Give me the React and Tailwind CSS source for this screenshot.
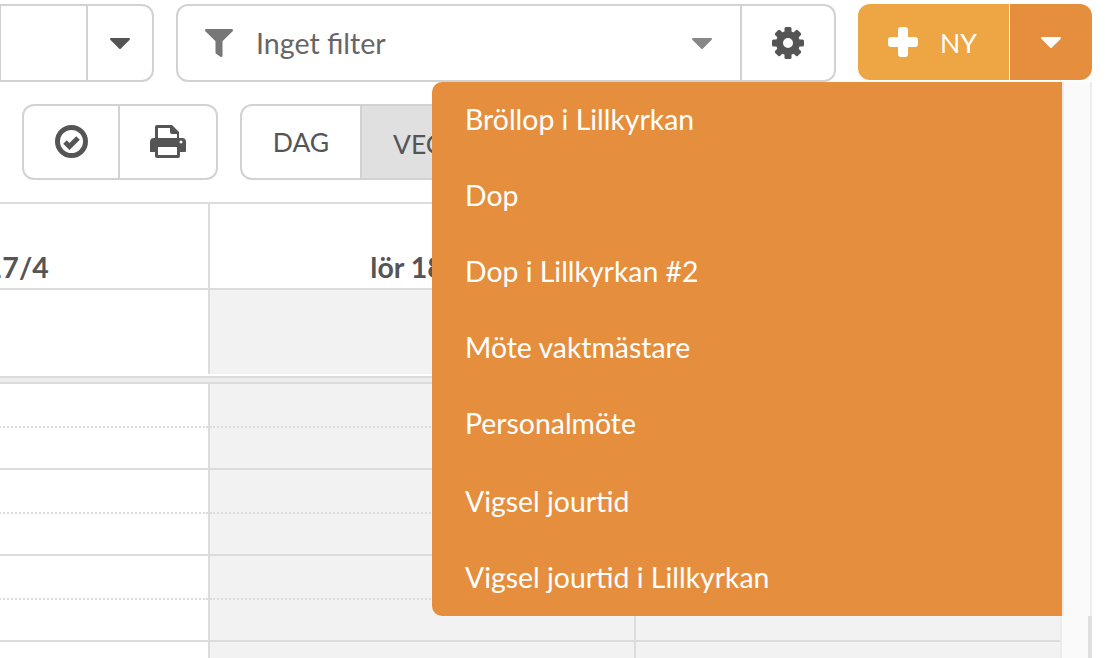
import { FaFilter } from "react-icons/fa";

function Caret({ className }) {
    return (
        <svg width="20" height="11" viewBox="0 0 20 11" className={className}>
            <path d="M1 0h18a1 1 0 0 1 .7 1.7l-9 9a1 1 0 0 1-1.4 0l-9-9A1 1 0 0 1 1 0z" fill="currentColor" />
        </svg>
    );
}

function PrintIcon() {
    return (
        <svg width="36" height="33" viewBox="0 0 36 33" className="text-[#555]">
            <path
                fill="currentColor"
                fillRule="evenodd"
                d="M5 2a2 2 0 0 1 2-2h15l7 7v6h3a4 4 0 0 1 4 4v9a1 1 0 0 1-1 1h-5v4a2 2 0 0 1-2 2H7a2 2 0 0 1-2-2v-4H0.500a.5.5 0 0 1-.5-.5V17a4 4 0 0 1 4-4h1zM8 3v10h19V9h-5a2 2 0 0 1-2-2V3zM8 22v8h19v-8zM31 15.500a1.500 1.500 0 1 0 .01 0z"
            />
        </svg>
    );
}

function CheckIcon() {
    return (
        <svg width="33" height="33" viewBox="0 0 33 33" fill="none" stroke="#555" className="shrink-0">
            <circle cx="16.500" cy="16.500" r="14" strokeWidth="5" />
            <path d="M10 17l4.500 4.500 8.500-8.500" strokeWidth="5" />
        </svg>
    );
}

function GearIcon() {
    return (
        <svg width="32" height="32" viewBox="0 0 32 32" className="text-[#555]">
            <circle cx="16" cy="16" r="8.500" fill="none" stroke="currentColor" strokeWidth="7" />
            {[0, 45, 90, 135, 180, 225, 270, 315].map((deg) => (
                <rect key={deg} x="12.500" y="0" width="7" height="7" rx="1.500" fill="currentColor" transform={`rotate(${deg} 16 16)`} />
            ))}
        </svg>
    );
}

function PlusIcon() {
    return (
        <svg width="30" height="30" viewBox="0 0 30 30" className="shrink-0" fill="#fff">
            <rect x="10" y="0" width="10" height="30" rx="3" />
            <rect x="0" y="10" width="30" height="10" rx="3" />
        </svg>
    );
}

function Row({ dotted = true }) {
    return (
        <div className="grid grid-cols-[426px_426px_426px] h-[86px] border-b-2 border-[#dcdcdc]">
            {[0, 1, 2].map((i) => (
                <div key={i} className={`h-full border-r-2 border-[#dcdcdc] pt-[42px] ${i === 0 ? "bg-white" : "bg-[#f2f2f2]"}`}>
                    {dotted && <div className="border-t-2 border-dotted border-[#dcdcdc]" />}
                </div>
            ))}
        </div>
    );
}

const items = [
    "Bröllop i Lillkyrkan",
    "Dop",
    "Dop i Lillkyrkan #2",
    "Möte vaktmästare",
    "Personalmöte",
    "Vigsel jourtid",
    "Vigsel jourtid i Lillkyrkan",
];

export default function App() {
    return (
        <div className="relative w-[1110px] h-[658px] overflow-hidden bg-white font-['Lato',sans-serif] text-[#555]">
            <div className="flex h-[104px] pt-1">
                <div className="flex w-[155px] h-[78px] justify-end -ml-px rounded-r-xl border-2 border-[#d2d2d2]">
                    <div className="flex w-[66px] items-center justify-center border-l-2 border-[#d2d2d2]">
                        <Caret className="text-[#555]" />
                    </div>
                </div>
                <div className="flex ml-[22px] w-[660px] h-[78px] rounded-xl border-2 border-[#d2d2d2]">
                    <div className="flex flex-1 items-center pl-[27px] pr-[28px] text-[#666]">
                        <FaFilter className="w-[28px] h-[28px] text-[#777]" />
                        <span className="ml-[23px] flex-1 text-[28.6px]">Inget filter</span>
                        <Caret className="text-[#888]" />
                    </div>
                    <div className="flex w-[94px] items-center justify-center border-l-2 border-[#d2d2d2]">
                        <GearIcon />
                    </div>
                </div>
                <div className="flex ml-[22px] h-[76px] text-white">
                    <div className="flex w-[151px] items-center rounded-l-xl bg-[#eea543] pl-[30px]">
                        <PlusIcon />
                        <span className="ml-[22px] pt-[3px] text-[26.5px]">NY</span>
                    </div>
                    <div className="flex w-[82px] ml-px items-center justify-center rounded-r-xl bg-[#e58f3e]">
                        <Caret />
                    </div>
                </div>
            </div>

            <div className="flex h-[98px] pl-[22px]">
                <div className="flex h-[76px] w-[196px] rounded-xl border-2 border-[#d2d2d2]">
                    <div className="flex w-[96px] items-center justify-center border-r-2 border-[#d2d2d2] pb-[2px]">
                        <CheckIcon />
                    </div>
                    <div className="flex flex-1 items-center justify-center pb-[2px]">
                        <PrintIcon />
                    </div>
                </div>
                <div className="flex ml-[22px] h-[76px] w-[400px] overflow-hidden rounded-xl border-2 border-[#d2d2d2] text-[26.5px]">
                    <div className="flex w-[120px] items-center justify-center border-r-2 border-[#d2d2d2] pt-[2px]">DAG</div>
                    <div className="flex-1 bg-[#e0e0e0] pl-[31px] pt-[2px] leading-[72px]">VECKA</div>
                </div>
            </div>

            <div className="w-[1060px] overflow-hidden">
                <div className="-ml-[216px] w-[1278px]">
                    <div className="grid grid-cols-[426px_426px_426px] h-[88px] border-y-2 border-[#dcdcdc] text-[28.5px] font-bold">
                        {["fre 17/4", "lör 18/4", "sön 19/4"].map((day) => (
                            <div key={day} className="h-full border-r-2 border-[#dcdcdc] pt-[42px] text-center">
                                {day}
                            </div>
                        ))}
                    </div>
                    <div className="grid grid-cols-[426px_426px_426px] h-[84px] mb-[2px]">
                        <div className="border-r-2 border-[#dcdcdc]" />
                        <div className="border-r-2 border-[#dcdcdc] bg-[#f2f2f2]" />
                        <div className="bg-[#f2f2f2]" />
                    </div>
                    <div className="h-2 border-y-2 border-[#dcdcdc] bg-[#ececec]" />
                    <Row />
                    <Row />
                    <Row />
                    <Row dotted={false} />
                </div>
            </div>

            {/* scrollbar track, narrower above where the menu ends */}
            <div className="absolute left-[1062px] top-[82px] h-[534px] w-[30px] border-x-2 border-[#ececec] bg-[#fafafa]" />
            <div className="absolute left-[1060px] top-[616px] bottom-0 w-[32px] border-l-2 border-r-4 border-l-[#ececec] border-r-[#e0e0e0] bg-[#fafafa]" />

            <ul className="absolute left-[432px] top-[82px] w-[630px] h-[534px] rounded-l-[10px] bg-[#e58f3e] text-[28.4px] text-white">
                {items.map((item, i) => (
                    <li key={item} className={`h-[76px] pl-[33px] leading-[74px] ${i === 5 ? "mt-[2px]" : ""}`}>
                        {item}
                    </li>
                ))}
            </ul>
        </div>
    );
}
